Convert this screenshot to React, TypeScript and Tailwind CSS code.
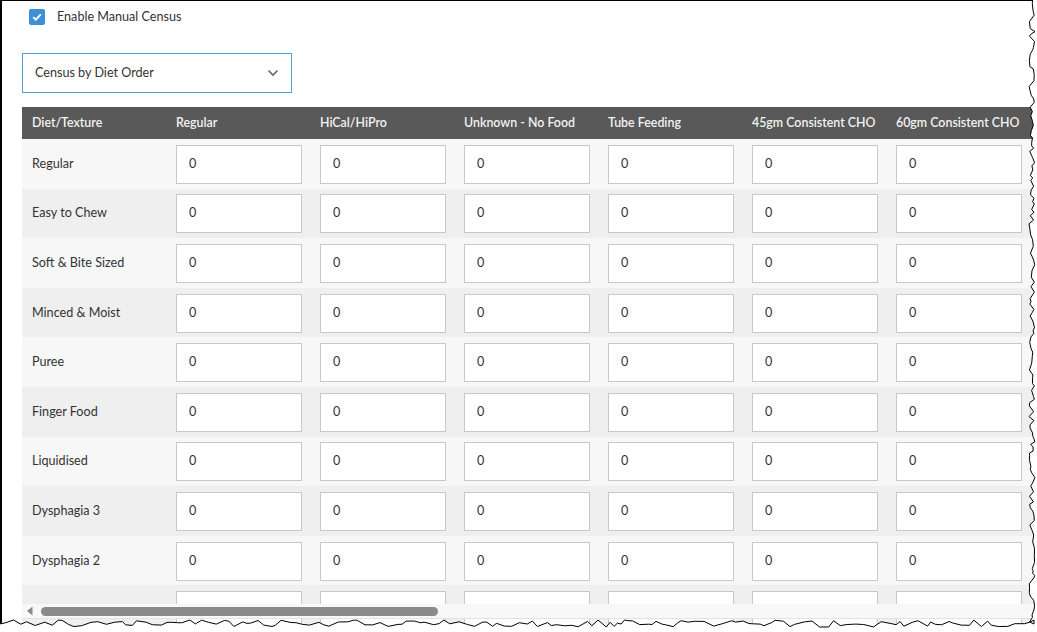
import React from "react";

const columns = [
  "Regular",
  "HiCal/HiPro",
  "Unknown - No Food",
  "Tube Feeding",
  "45gm Consistent CHO",
  "60gm Consistent CHO",
  "Renal Diet",
  "Gluten Free",
];

const rows = [
  "Regular",
  "Easy to Chew",
  "Soft & Bite Sized",
  "Minced & Moist",
  "Puree",
  "Finger Food",
  "Liquidised",
  "Dysphagia 3",
  "Dysphagia 2",
  "Modified Soft",
];

function rng(seed: number) {
  let s = seed;
  return () => {
    s = (s * 1103515245 + 12345) % 2147483648;
    return s / 2147483648;
  };
}

function TornEdge() {
  const r = rng(7);
  const right: [number, number][] = [];
  let y = 0;
  while (y < 622) {
    right.push([1029 + r() * 6, y]);
    y += 2 + r() * 5;
  }
  right.push([1034, 624]);
  const bottom: [number, number][] = [];
  let x = 1034;
  while (x > 0) {
    bottom.push([x, 620 + r() * 7]);
    x -= 3 + r() * 7;
  }
  bottom.push([0, 622]);
  const pts = [...right, ...bottom];
  const line = pts.map((p, i) => `${i ? "L" : "M"}${p[0].toFixed(1)},${p[1].toFixed(1)}`).join(" ");
  const fill = `M1037,0 ${pts.map((p) => `L${p[0].toFixed(1)},${p[1].toFixed(1)}`).join(" ")} L0,632 L1037,632 Z`;
  return (
    <svg className="absolute left-0 top-0 pointer-events-none" width="1037" height="632">
      <path d={fill} fill="#ffffff" />
      <path d={line} fill="none" stroke="#000" strokeWidth="1" />
    </svg>
  );
}

export default function App() {
  return (
    <div
      className="relative w-[1037px] h-[632px] overflow-hidden bg-white text-[#333]"
      style={{ fontFamily: "Lato, 'Open Sans', sans-serif" }}
    >
      <div className="h-full border-l-[2px] border-t border-black flex flex-col">
        <div className="flex items-center h-[31px] pl-[27px] pt-[1px]">
          <div className="w-[16px] h-[16px] rounded-[2px] bg-[#3d8fd8] flex items-center justify-center">
            <svg width="12" height="12" viewBox="0 0 12 12">
              <path d="M2.2 6.2 L4.8 8.7 L9.8 3.3" fill="none" stroke="#fff" strokeWidth="1.8" />
            </svg>
          </div>
          <span className="ml-[12px] text-[12.6px] text-[#333]">Enable Manual Census</span>
        </div>
        <div className="pl-[20px] mt-[21px]">
          <div className="w-[270px] h-[40px] border border-[#4aa2db] flex items-center justify-between pl-[12px] pr-[12px]">
            <span className="text-[12.6px] text-[#333]">Census by Diet Order</span>
            <svg width="12" height="8" viewBox="0 0 12 8">
              <path d="M1.5 1.5 L6 6 L10.5 1.5" fill="none" stroke="#666" strokeWidth="1.6" />
            </svg>
          </div>
        </div>
        <div className="ml-[20px] mt-[14px] flex-1 overflow-hidden relative">
          <div className="flex h-[32px] items-center bg-[#595959] w-max">
            <div className="w-[144px] shrink-0 pl-[10px] text-[12.4px] font-semibold text-[#f2f2f2]">Diet/Texture</div>
            {columns.map((c) => (
              <div key={c} className="w-[144px] shrink-0 pl-[10px] text-[12.4px] font-semibold text-[#f2f2f2] whitespace-nowrap">
                {c}
              </div>
            ))}
          </div>
          {rows.map((row, i) => (
            <div
              key={row}
              className={`flex h-[49.6px] pt-[1px] items-center w-max ${i % 2 === 0 ? "bg-[#f7f7f7]" : "bg-[#efefef]"}`}
            >
              <div className="w-[144px] shrink-0 pl-[10px] text-[12.6px] text-[#333]">{row}</div>
              {columns.map((c) => (
                <div key={c} className="w-[144px] shrink-0 pl-[10px]">
                  <div className="w-[126px] h-[39px] border border-[#c8c8c8] bg-white flex items-center pl-[12px] text-[12.6px] text-[#333]">
                    0
                  </div>
                </div>
              ))}
            </div>
          ))}
          <div className="absolute left-0 right-0 top-[497px] h-[15px] bg-[#f8f8f8] border-b border-[#e2e2e2] flex items-center">
            <svg className="ml-[4px]" width="8" height="10" viewBox="0 0 8 10">
              <path d="M6.5 0.5 L1 5 L6.5 9.5 Z" fill="#8a8a8a" />
            </svg>
            <div className="ml-[7px] w-[397px] h-[9px] rounded-full bg-[#8a8a8a]" />
          </div>
        </div>
      </div>
      <TornEdge />
    </div>
  );
}
